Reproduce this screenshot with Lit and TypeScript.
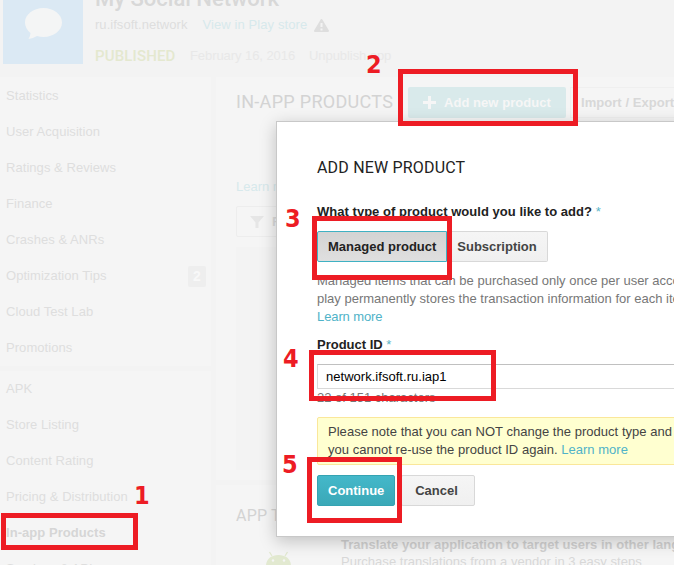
import { LitElement, html, css } from "lit";
import { customElement, property } from "lit/decorators.js";

@customElement("side-nav")
class SideNav extends LitElement {
  static styles = css`
    :host { display: block; width: 211px; flex: none; border-right: 5px solid #f3f3f3; }
    .group { padding: 1px 0 0; }
    .group + .group { border-top: 5px solid #f3f3f3; }
    .group + .group { padding-top: 0; }
    .item { display: flex; align-items: center; justify-content: space-between; height: 36px; box-sizing: border-box; padding: 0 5px 0 6px; color: #dedede; white-space: nowrap; letter-spacing: 0.05px; }
    .item.current { font-weight: bold; color: #d6d6d6; }
    .badge { width: 18px; height: 21px; line-height: 21px; border-radius: 2px; background: #eeeeee; color: #f8f8f8; font-weight: bold; font-size: 14px; text-align: center; }
  `;
  groups = [
    ["Statistics", "User Acquisition", "Ratings & Reviews", "Finance", "Crashes & ANRs", "Optimization Tips", "Cloud Test Lab", "Promotions"],
    ["APK", "Store Listing", "Content Rating", "Pricing & Distribution", "In-app Products", "Services & APIs"],
  ];
  render() {
    return this.groups.map(
      (g) => html`<div class="group">
        ${g.map(
          (name) => html`<div class="item ${name === "In-app Products" ? "current" : ""}">
            <span>${name}</span>${name === "Optimization Tips" ? html`<span class="badge">2</span>` : ""}
          </div>`
        )}
      </div>`
    );
  }
}

@customElement("product-dialog")
class ProductDialog extends LitElement {
  static styles = css`
    :host { display: block; box-sizing: border-box; background: #fff; border: 1px solid #c8c8c8; padding: 35px 40px 0; color: #222; line-height: 18px; box-shadow: 0 4px 16px rgba(0, 0, 0, 0.22); white-space: nowrap; }
    h2 { margin: 0; font: 400 16px/22px Roboto, sans-serif; letter-spacing: 0.18px; color: #222; }
    .label { font-weight: bold; }
    .q { margin-top: 24px; letter-spacing: 0.03px; }
    .star { color: #58b4c7; font-weight: normal; }
    .row { display: flex; }
    .types { margin-top: 10px; }
    button { font: bold 13px/29px "Liberation Sans", sans-serif; height: 31px; box-sizing: border-box; padding: 0 10px; border: 1px solid #d8d8d8; border-radius: 2px; background: linear-gradient(#f5f5f5, #f0f0f0); color: #444; }
    .managed { width: 130px; background: linear-gradient(#d3d3d3, #dfdfdf); border-color: #3fb1c3; color: #222; border-radius: 2px 0 0 2px; }
    .sub { width: 101px; border-left: 0; border-radius: 0 2px 2px 0; }
    .help { margin-top: 10px; color: #777; }
    .link { color: #4fb3c8; }
    .help .link { letter-spacing: -0.1px; }
    .id { margin-top: 10px; }
    .field { margin-top: 10px; height: 25px; box-sizing: border-box; border: 1px solid #d9d9d9; border-top-color: #c0c0c0; padding: 0 8px; line-height: 24px; color: #000; width: 480px; letter-spacing: 0.03px; }
    .count { color: #777; line-height: 18px; }
    .note { margin-top: 10px; width: 480px; box-sizing: border-box; height: 48px; padding: 5px 10px; border: 1px solid #fae79a; border-radius: 2px; background: #ffffd0; color: #444; letter-spacing: 0.03px; }
    .actions { margin-top: 10px; gap: 6px; }
    .go { width: 78px; color: #fff; border-color: #35a3b2; background: linear-gradient(#44b8ca, #3aa8b7); }
    .cancel { width: 74px; padding-right: 13px; }
  `;
  render() {
    return html`
      <h2>ADD NEW PRODUCT</h2>
      <div class="label q">What type of product would you like to add? <span class="star">*</span></div>
      <div class="row types"><button class="managed">Managed product</button><button class="sub">Subscription</button></div>
      <div class="help">
        <div>Managed items that can be purchased only once per user account. Google</div>
        <div>play permanently stores the transaction information for each item.</div>
        <div class="link">Learn more</div>
      </div>
      <div class="label id">Product ID <span class="star">*</span></div>
      <div class="field">network.ifsoft.ru.iap1</div>
      <div class="count">22 of 151 characters</div>
      <div class="note">
        <div>Please note that you can NOT change the product type and</div>
        <div>you cannot re-use the product ID again. <span class="link">Learn more</span></div>
      </div>
      <div class="row actions"><button class="go">Continue</button><button class="cancel">Cancel</button></div>
    `;
  }
}

@customElement("step-mark")
class StepMark extends LitElement {
  @property({ type: Number }) n = 1;
  static styles = css`
    :host { position: absolute; box-sizing: border-box; border: 5px solid #ed1c24; }
    .n { position: absolute; color: #ed1c24; font: bold 25px/28px "DejaVu Sans Condensed", "DejaVu Sans", sans-serif; font-stretch: condensed; }
    .n1 { left: 128px; top: -36px; }
    .n2 { left: -37px; top: -23px; }
    .n3 { left: -32px; top: -16px; }
    .n4 { left: -31px; top: -10px; }
    .n5 { left: -30px; top: -11px; }
  `;
  render() {
    return html`<span class="n n${this.n}">${this.n}</span>`;
  }
}

@customElement("app-root")
class AppRoot extends LitElement {
  static styles = css`
    :host { display: block; position: relative; width: 674px; height: 565px; overflow: hidden; background: #f5f5f5; font: 13px/18px "Liberation Sans", Arial, sans-serif; color: #dedede; }
    header { display: flex; gap: 12px; height: 77px; padding-left: 3px; background: #f3f3f3; white-space: nowrap; }
    .logo { width: 80px; height: 64px; background: #dbe9f4; }
    .logo svg { display: block; }
    .info { display: flex; flex-direction: column; }
    .name { font: 500 22px/28px Roboto, sans-serif; margin-top: -15px; height: 28px; color: #d8d8d8; }
    .line { display: flex; align-items: center; height: 18px; margin-top: 3px; letter-spacing: 0.04px; }
    .cyan { color: #d7e9ec; }
    .play { margin: 0 7px 0 15px; letter-spacing: 0.1px; }
    .status { display: flex; align-items: center; margin-top: 12px; height: 20px; color: #e8e8e8; letter-spacing: -0.07px; }
    .pub { font: 500 15px/20px Roboto, sans-serif; color: #e4e8cf; width: 80px; margin-right: 15px; letter-spacing: 0.15px; }
    .date { margin-right: 14px; }
    .body { display: flex; height: 488px; }
    main { flex: 1; min-width: 0; white-space: nowrap; }
    .products { height: 403px; box-sizing: border-box; padding: 10px 0 0 20px; }
    .bar { display: flex; align-items: center; height: 31px; }
    .title { font: 400 18px/24px Roboto, sans-serif; color: #d3d3d3; width: 172px; flex: none; letter-spacing: 0.3px; margin-top: -2px; }
    .add { display: flex; align-items: center; box-sizing: border-box; width: 158px; height: 31px; flex: none; padding-left: 15px; gap: 8px; background: #d9eaeb; border-radius: 2px; color: #f6f6f6; font-weight: bold; letter-spacing: 0.05px; }
    .imp { flex: 1; margin-left: 4px; height: 29px; line-height: 29px; border: 1px solid #efefef; border-right: 0; padding-left: 10px; font-weight: bold; color: #d8d8d8; letter-spacing: 0.05px; }
    .learn { margin-top: 60px; }
    .filter { display: flex; align-items: center; gap: 8px; box-sizing: border-box; width: 110px; height: 31px; margin-top: 10px; padding-left: 13px; border: 1px solid #ededed; border-radius: 2px; font-weight: bold; color: #dadada; }
    .table { height: 223px; margin-top: 10px; background: #f3f3f3; }
    .trans { border-top: 5px solid #f3f3f3; padding: 19px 0 0 20px; }
    .apptitle { font: 400 16px/24px Roboto, sans-serif; color: #d3d3d3; letter-spacing: 0.2px; }
    .offer { display: flex; gap: 48px; padding-left: 29px; margin-top: 8px; line-height: 17px; }
    .offer svg { margin-top: 15px; flex: none; }
    .offer div { color: #d8d8d8; }
    .offer b { display: block; letter-spacing: 0.03px; color: #d1d1d1; }
    .offer span { letter-spacing: 0.03px; }
    product-dialog { position: absolute; left: 276px; top: 121px; width: 420px; height: 416px; }
    .s1 { left: 1px; top: 513px; width: 137px; height: 37px; }
    .s2 { left: 398px; top: 69px; width: 180px; height: 57px; }
    .s3 { left: 312px; top: 216px; width: 140px; height: 64px; }
    .s4 { left: 309px; top: 350px; width: 187px; height: 51px; }
    .s5 { left: 307px; top: 457px; width: 95px; height: 66px; }
  `;
  render() {
    return html`
      <header>
        <div class="logo">
          <svg width="80" height="64" fill="#f4f5f5"><path d="M40.5 8C50.7 8 59 14.500 59 22.500S50.700 37 40.500 37Q37 37 34 36Q30 38.500 25.500 39Q27.300 36.500 27.500 33Q22 28.500 22 22.500C22 14.500 30.300 8 40.500 8Z"/></svg>
        </div>
        <div class="info">
          <div class="name">My Social Network</div>
          <div class="line">
            <span>ru.ifsoft.network</span><span class="cyan play">View in Play store</span>
            <svg width="15" height="13"><path d="M7.500 1 14 12H1Z" fill="#dedede" stroke="#dedede" stroke-width="2" stroke-linejoin="round"/><path d="M7.500 4v4M7.500 9.500v2" stroke="#f3f3f3" stroke-width="2"/></svg>
          </div>
          <div class="status"><span class="pub">PUBLISHED</span><span class="date">February 16, 2016</span><span>Unpublish app</span></div>
        </div>
      </header>
      <div class="body">
        <side-nav></side-nav>
        <main>
          <div class="products">
            <div class="bar">
              <span class="title">IN-APP PRODUCTS</span>
              <span class="add"><svg width="13" height="13"><path d="M6.500 0v13M0 6.500h13" stroke="#f6f6f6" stroke-width="3"/></svg>Add new product</span>
              <span class="imp">Import / Export</span>
            </div>
            <div class="learn cyan">Learn more</div>
            <div class="filter"><svg width="14" height="12"><path d="M0 0h14L8.500 6.500V12h-3V6.500Z" fill="#e6e6e6"/></svg>Filter</div>
            <div class="table"></div>
          </div>
          <div class="trans">
            <div class="apptitle">APP TRANSLATION</div>
            <div class="offer">
              <svg width="28" height="28" fill="#e2e9d0"><path d="M1 15C1 8 6.500 4 13.500 4S26 8 26 15Z"/><path d="M7 5 4.500 1M20 5l2.500-4" stroke="#e2e9d0" stroke-width="1.300"/><circle cx="8" cy="9.500" r="1.200" fill="#f5f5f5"/><circle cx="19" cy="9.500" r="1.200" fill="#f5f5f5"/></svg>
              <div><b>Translate your application to target users in other languages</b><span>Purchase translations from a vendor in 3 easy steps</span></div>
            </div>
          </div>
        </main>
      </div>
      <product-dialog></product-dialog>
      ${[1, 2, 3, 4, 5].map((n) => html`<step-mark class="s${n}" .n=${n}></step-mark>`)}
    `;
  }
}
